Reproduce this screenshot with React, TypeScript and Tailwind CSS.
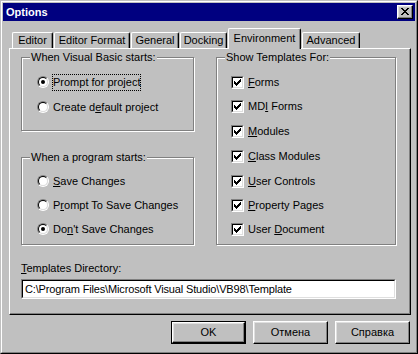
const tabs = [
  { label: 'Editor', w: 'w-[41px]' },
  { label: 'Editor Format', w: 'w-[76px]' },
  { label: 'General', w: 'w-[48px]' },
  { label: 'Docking', w: 'w-[47px]' },
  { label: 'Environment', w: 'w-[73px]', active: true },
  { label: 'Advanced', w: 'w-[58px]' },
]

// label split as [before, mnemonic, after]
const templates: { parts: [string, string, string]; h: string }[] = [
  { parts: ['', 'F', 'orms'], h: 'h-[24px]' },
  { parts: ['MD', 'I', ' Forms'], h: 'h-[25px]' },
  { parts: ['', 'M', 'odules'], h: 'h-[24px]' },
  { parts: ['', 'C', 'lass Modules'], h: 'h-[26px]' },
  { parts: ['', 'U', 'ser Controls'], h: 'h-[24px]' },
  { parts: ['', 'P', 'roperty Pages'], h: 'h-[24px]' },
  { parts: ['User ', 'D', 'ocument'], h: 'h-[24px]' },
]

const Label = ({ parts }: { parts: [string, string, string] }) => (
  <span className="whitespace-pre">
    {parts[0]}
    <u>{parts[1]}</u>
    {parts[2]}
  </span>
)

const Radio = ({ checked }: { checked?: boolean }) => (
  <div className="w-[12px] h-[12px] rounded-full border border-t-[#808080] border-l-[#808080] border-r-white border-b-white shrink-0">
    <div className="w-full h-full rounded-full border border-t-black border-l-black border-r-[#dfdfdf] border-b-[#dfdfdf] bg-white flex items-center justify-center">
      {checked && <div className="w-[4px] h-[4px] rounded-full bg-black" />}
    </div>
  </div>
)

const Check = () => (
  <div className="w-[13px] h-[13px] border border-t-[#808080] border-l-[#808080] border-r-white border-b-white shrink-0">
    <div className="w-full h-full border border-t-black border-l-black border-r-[#dfdfdf] border-b-[#dfdfdf] bg-white pl-[1px] pt-[1px]">
      <svg width="7" height="7" viewBox="0 0 7 7" shapeRendering="crispEdges" className="block">
        <path
          fill="black"
          d="M6 0h1v1h-1z M5 1h2v1h-2z M0 2h1v1h-1z M4 2h3v1h-3z M0 3h2v1h-2z M3 3h3v1h-3z M0 4h5v1h-5z M1 5h3v1h-3z M2 6h1v1h-1z"
        />
      </svg>
    </div>
  </div>
)

const RadioRow = ({ parts, checked, focused, h }: { parts: [string, string, string]; checked?: boolean; focused?: boolean; h: string }) => (
  <div className={`flex items-center pl-[15px] ${h}`}>
    <Radio checked={checked} />
    <span
      className={`ml-[3px] border border-dotted py-[1px] leading-[13px] ${focused ? 'border-black' : 'border-transparent'}`}
    >
      <Label parts={parts} />
    </span>
  </div>
)

const Group = ({ title, className, children }: { title: string; className: string; children: React.ReactNode }) => (
  <div className={`relative border border-[#808080] shadow-[inset_1px_1px_0_white,1px_1px_0_white] ${className}`}>
    <span className="absolute -top-[7px] left-[8px] px-[1px] bg-[#c0c0c0] leading-[13px] whitespace-nowrap">{title}</span>
    {children}
  </div>
)

const Button = ({ children, isDefault }: { children: React.ReactNode; isDefault?: boolean }) => (
  <div className={`w-[75px] h-[23px] ${isDefault ? 'border border-black' : ''}`}>
    <div className="w-full h-full border border-t-white border-l-white border-r-black border-b-black shadow-[inset_-1px_-1px_0_#808080,inset_1px_1px_0_#dfdfdf] flex items-center justify-center">
      {children}
    </div>
  </div>
)

export default function App() {
  return (
    <div className="w-[418px] h-[354px] bg-[#c0c0c0] border border-t-[#c0c0c0] border-l-[#c0c0c0] border-r-black border-b-black font-['Liberation_Sans',Arial,sans-serif] text-[11px] leading-[13px] text-black">
      <div className="w-full h-full border border-t-white border-l-white border-r-[#808080] border-b-[#808080] p-[1px] flex flex-col">
        {/* title bar */}
        <div className="h-[18px] bg-[#000080] flex items-center justify-between pl-[3px] pr-[2px]">
          <span className="text-white font-bold">Options</span>
          <div className="w-[16px] h-[14px] bg-[#c0c0c0] border border-t-white border-l-white border-r-black border-b-black shadow-[inset_-1px_-1px_0_#808080,inset_1px_1px_0_#dfdfdf] pl-[3px] pt-[2px]">
            <svg width="8" height="7" viewBox="0 0 8 7" shapeRendering="crispEdges" className="block">
              <path
                fill="black"
                d="M0 0h2v1h-2z M6 0h2v1h-2z M1 1h2v1h-2z M5 1h2v1h-2z M2 2h4v1h-4z M3 3h2v1h-2z M2 4h4v1h-4z M1 5h2v1h-2z M5 5h2v1h-2z M0 6h2v1h-2z M6 6h2v1h-2z"
              />
            </svg>
          </div>
        </div>

        {/* tabs */}
        <div className="mt-[7px] ml-[9px] h-[20px] flex items-end gap-[1px]">
          {tabs.map((t) => (
            <div
              key={t.label}
              className={`${t.w} flex items-center justify-center whitespace-nowrap bg-[#c0c0c0] rounded-t-[2px] border-t border-l border-r border-t-white border-l-white border-r-black shadow-[inset_-1px_0_0_#808080] ${
                t.active ? 'h-[21px] -mb-[1px] relative z-10 pb-[1px]' : 'h-[16px]'
              }`}
            >
              {t.label}
            </div>
          ))}
        </div>

        {/* panel */}
        <div className="ml-[6px] w-[402px] h-[267px] border border-t-white border-l-white border-r-black border-b-black shadow-[inset_-1px_-1px_0_#808080] pl-[11px] pt-[8px]">
          <div className="flex gap-[22px]">
            <div className="w-[173px] flex flex-col">
              <Group title="When Visual Basic starts:" className="h-[74px] pt-[12px]">
                <RadioRow parts={['Prompt for pro', 'j', 'ect']} checked focused h="h-[24px]" />
                <RadioRow parts={['Create d', 'e', 'fault project']} h="h-[26px]" />
              </Group>
              <Group title="When a program starts:" className="mt-[26px] h-[88px] pt-[11px]">
                <RadioRow parts={['', 'S', 'ave Changes']} h="h-[24px]" />
                <RadioRow parts={['P', 'r', 'ompt To Save Changes']} h="h-[24px]" />
                <RadioRow parts={['Do', 'n', "'t Save Changes"]} checked h="h-[24px]" />
              </Group>
            </div>
            <Group title="Show Templates For:" className="w-[180px] h-[188px] pt-[12px]">
              {templates.map((t) => (
                <div key={t.parts.join('')} className={`flex items-center pl-[14px] gap-[4px] ${t.h}`}>
                  <Check />
                  <Label parts={t.parts} />
                </div>
              ))}
            </Group>
          </div>

          <div className="mt-[17px]">
            <u>T</u>emplates Directory:
          </div>
          <div className="mt-[4px] w-[375px] h-[20px] bg-white border border-t-[#808080] border-l-[#808080] border-r-white border-b-white">
            <div className="w-full h-full border border-t-black border-l-black border-r-[#dfdfdf] border-b-[#dfdfdf] pl-[2px] flex items-center whitespace-nowrap overflow-hidden tracking-[-0.15px]">
              C:\Program Files\Microsoft Visual Studio\VB98\Template
            </div>
          </div>
        </div>

        {/* buttons */}
        <div className="mt-[6px] mr-[5px] flex justify-end gap-[7px]">
          <Button isDefault>OK</Button>
          <Button>Отмена</Button>
          <Button>Справка</Button>
        </div>
      </div>
    </div>
  )
}
